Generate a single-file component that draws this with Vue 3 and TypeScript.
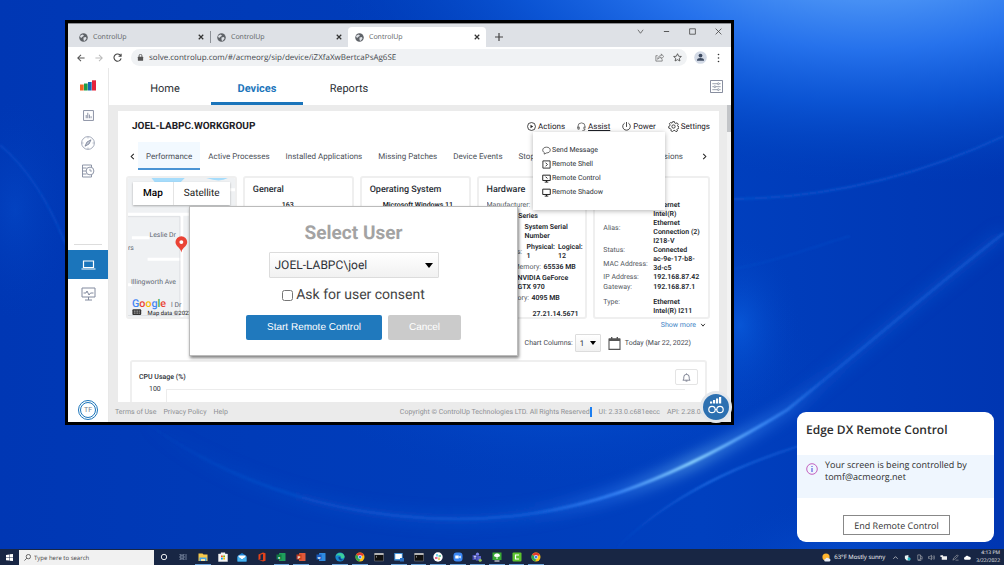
<script setup lang="ts">
import { ref } from 'vue'

interface Row {
  label: string
  lines: string[]
}

const browserTabs = [
  { title: 'ControlUp', active: false },
  { title: 'ControlUp', active: false },
  { title: 'ControlUp', active: true },
]
const navItems = ['Home', 'Devices', 'Reports']
const deviceTabs = [
  'Performance',
  'Active Processes',
  'Installed Applications',
  'Missing Patches',
  'Device Events',
  'Stop Errors',
]
const hardware: (Row & { size: string })[] = [
  { label: 'Manufacturer:', lines: [''], size: 'wide' },
  { label: '', lines: ['Dell Series'], size: 'narrow' },
  { label: 'BIOS:', lines: ['System Serial', 'Number'], size: 'mid' },
]
const network: (Row & { kind: string })[] = [
  { label: '', lines: ['Ethernet'], kind: 'first' },
  { label: 'Alias:', lines: ['Intel(R)', 'Ethernet', 'Connection (2)', 'I218-V'], kind: '' },
  { label: 'Status:', lines: ['Connected'], kind: '' },
  { label: 'MAC Address:', lines: ['ac-9e-17-b8-', '3d-c5'], kind: '' },
  { label: 'IP Address:', lines: ['192.168.87.42'], kind: 'line' },
  { label: 'Gateway:', lines: ['192.168.87.1'], kind: '' },
  { label: 'Type:', lines: ['Ethernet'], kind: 'spaced' },
  { label: '', lines: ['Intel(R) I211'], kind: '' },
]
const apps: { name: string; open: boolean }[] = [
  { name: 'explorer', open: true },
  { name: 'store', open: false },
  { name: 'mail', open: false },
  { name: 'office', open: false },
  { name: 'excel', open: true },
  { name: 'powerpoint', open: true },
  { name: 'word', open: false },
  { name: 'edge', open: true },
  { name: 'chrome', open: true },
  { name: 'terminal', open: false },
  { name: 'desktop', open: true },
  { name: 'terminal', open: true },
  { name: 'slack', open: true },
  { name: 'zoom', open: true },
  { name: 'teams', open: true },
  { name: 'tree', open: true },
  { name: 'camtasia', open: true },
  { name: 'chrome', open: true },
]
const letters: Record<string, { fill: string; side: string; text: string }> = {
  excel: { fill: '#1f9e5c', side: '#107c41', text: 'x' },
  powerpoint: { fill: '#e0593a', side: '#c43e1c', text: 'P' },
  word: { fill: '#2f8be0', side: '#185abd', text: 'w' },
}
const user = ref('JOEL-LABPC\\joel')
const consent = ref(false)
const columns = ref('1')
</script>

<template>
  <div class="desktop">
    <svg class="wallpaper" viewBox="0 0 1004 565" preserveAspectRatio="none" aria-hidden="true">
      <defs>
        <linearGradient id="base" x1="0" y1="0" x2="1" y2="0">
          <stop offset="0" stop-color="#0037b4" />
          <stop offset=".25" stop-color="#003bb8" />
          <stop offset=".7" stop-color="#0040bf" />
          <stop offset="1" stop-color="#0036b2" />
        </linearGradient>
        <radialGradient id="sky" cx="0" cy="0" r="1" gradientUnits="userSpaceOnUse" gradientTransform="translate(870 -50) scale(560 235)">
          <stop offset="0" stop-color="#4f9bf6" />
          <stop offset=".22" stop-color="#468ff4" />
          <stop offset=".42" stop-color="#2672ec" />
          <stop offset=".65" stop-color="#0d58d8" stop-opacity=".85" />
          <stop offset=".85" stop-color="#0347c4" stop-opacity=".5" />
          <stop offset="1" stop-color="#003cba" stop-opacity="0" />
        </radialGradient>
        <radialGradient id="glow">
          <stop offset="0" stop-color="#0b62e4" />
          <stop offset="1" stop-color="#0040c0" stop-opacity="0" />
        </radialGradient>
        <linearGradient id="arc" x1="140" y1="0" x2="1004" y2="0" gradientUnits="userSpaceOnUse">
          <stop offset="0" stop-color="#0a50cb" stop-opacity="0" />
          <stop offset=".15" stop-color="#0a50cb" stop-opacity=".6" />
          <stop offset=".45" stop-color="#0f5ad6" />
          <stop offset=".55" stop-color="#3480f4" />
          <stop offset=".64" stop-color="#8ad2ff" />
          <stop offset=".72" stop-color="#3b88f4" />
          <stop offset=".79" stop-color="#1257d2" />
          <stop offset="1" stop-color="#0850ca" />
        </linearGradient>
        <linearGradient id="line" x1="610" y1="0" x2="900" y2="0" gradientUnits="userSpaceOnUse">
          <stop offset="0" stop-color="#0b50cc" stop-opacity="0" />
          <stop offset=".35" stop-color="#2370e8" />
          <stop offset="1" stop-color="#0b50cc" stop-opacity="0" />
        </linearGradient>
        <filter id="soft" x="-20%" y="-20%" width="140%" height="140%"><feGaussianBlur stdDeviation="7" /></filter>
        <filter id="fine"><feGaussianBlur stdDeviation="1" /></filter>
      </defs>
      <rect width="1004" height="565" fill="url(#base)" />
      <ellipse cx="560" cy="360" rx="260" ry="125" fill="url(#glow)" opacity=".8" />
      <ellipse cx="740" cy="325" rx="60" ry="90" fill="url(#glow)" opacity=".6" />
      <ellipse cx="850" cy="565" rx="150" ry="70" fill="url(#glow)" opacity=".5" />
      <ellipse cx="15" cy="210" rx="60" ry="110" fill="url(#glow)" opacity=".25" />
      <rect width="1004" height="230" fill="url(#sky)" />
      <g fill="none">
        <path d="M734 199 C820 198 910 180 1004 136" stroke="#0a50cb" stroke-width="2" filter="url(#fine)" />
        <path d="M734 269 C780 260 810 248 850 236" stroke="#0a4cc8" stroke-width="1" filter="url(#fine)" />
        <path d="M0 145 C30 170 50 205 66 245" stroke="#0a4fca" stroke-width="2" opacity=".7" filter="url(#fine)" />
        <path d="M145 422 C240 490 350 519 459 519 C570 519 665 485 787 410 C860 352 930 290 1004 233" stroke="url(#arc)" stroke-width="12" opacity=".5" filter="url(#soft)" />
        <path d="M145 422 C240 490 350 519 459 519 C570 519 665 485 787 410 C860 352 930 290 1004 233" stroke="url(#arc)" stroke-width="3" filter="url(#fine)" />
        <path d="M617 548 Q680 484 796 447 T1004 400" stroke="url(#line)" stroke-width="2" filter="url(#fine)" />
      </g>
    </svg>

    <section class="window" aria-label="ControlUp browser window">
      <div class="tabstrip">
        <div v-for="(t, i) in browserTabs" :key="i" class="btab" :class="{ active: t.active }">
          <svg class="i9" viewBox="0 0 18 18"><circle cx="9" cy="9" r="8.5" fill="#5f6368" /><path d="M3 5l4-2 3 2-2 2-2 1-1 2-3-2zM9 9l5-1 1 3-3 4-2 1-1-3z" fill="#dee1e6" /></svg>
          <span>{{ t.title }}</span>
          <button class="plain" aria-label="Close tab"><svg class="i6" viewBox="0 0 8 8"><path d="M1 1l6 6M7 1L1 7" stroke="#333" stroke-width="1.6" /></svg></button>
        </div>
        <button class="plain plus" aria-label="New tab"><svg class="i8" viewBox="0 0 8 8"><path d="M4 0v8M0 4h8" stroke="#444" stroke-width="1.2" /></svg></button>
        <div class="winctl">
          <button class="plain" aria-label="Search tabs"><svg class="i7" viewBox="0 0 8 8"><path d="M1 2l3 4 3-4" stroke="#555" fill="none" stroke-width=".9" /></svg></button>
          <button class="plain" aria-label="Minimize"><svg class="i7" viewBox="0 0 8 8"><path d="M1 4h6" stroke="#444" /></svg></button>
          <button class="plain" aria-label="Maximize"><svg class="i7" viewBox="0 0 8 8"><path d="M.7.9h6.6v6.2H.7z" stroke="#444" fill="none" stroke-width=".9" /></svg></button>
          <button class="plain" aria-label="Close"><svg class="i7" viewBox="0 0 8 8"><path d="M.7.7l6.6 6.6M7.3.7L.7 7.3" stroke="#444" stroke-width=".9" /></svg></button>
        </div>
      </div>
      <div class="toolbar">
        <button class="plain" aria-label="Back"><svg class="i8" viewBox="0 0 10 10"><path d="M9.500 5H1M5 1L1 5l4 4" stroke="#555" fill="none" stroke-width="1.3" /></svg></button>
        <button class="plain" aria-label="Forward"><svg class="i8" viewBox="0 0 10 10"><path d="M.5 5H9M5 1l4 4-4 4" stroke="#bbb" fill="none" stroke-width="1.3" /></svg></button>
        <button class="plain" aria-label="Reload"><svg class="i9" viewBox="0 0 10 10"><path d="M8.500 3A4 4 0 1 0 9 6M9 .8v2.800H6.200" stroke="#444" fill="none" stroke-width="1.2" /></svg></button>
        <div class="omni">
          <svg class="i7" viewBox="0 0 8 8"><rect x="1" y="3.200" width="6" height="4.600" rx=".6" fill="#555" /><path d="M2.400 3.500V2a1.600 1.600 0 0 1 3.200 0v1.500" fill="none" stroke="#555" /></svg>
          <input class="url" aria-label="Address" value="solve.controlup.com/#/acmeorg/sip/device/iZXfaXwBertcaPsAg6SE" />
          <svg class="i9" viewBox="0 0 10 10"><path d="M3 3H1v6h7V7M3 7c0-3 2-4 4-4V1l2.700 3L7 6.500V5C5 5 4 5.500 3 7z" fill="none" stroke="#666" stroke-width=".8" /></svg>
          <svg class="i9" viewBox="0 0 10 10"><path d="M5 .8l1.300 2.800 3 .3-2.300 2 .7 3L5 7.400 2.300 8.900l.7-3-2.300-2 3-.3z" fill="none" stroke="#444" stroke-width=".9" /></svg>
        </div>
        <svg class="i13" viewBox="0 0 13 13"><circle cx="6.500" cy="6.500" r="6.300" fill="#d3dae6" /><circle cx="6.500" cy="4.600" r="1.900" fill="#3d4a60" /><path d="M3 9.800V9c0-1.300 1.500-2 3.500-2s3.500.7 3.500 2v.8z" fill="#3d4a60" /></svg>
        <svg class="dots" viewBox="0 0 3 10"><circle cx="1.500" cy="1.500" r=".8" fill="#333" /><circle cx="1.500" cy="5" r=".8" fill="#333" /><circle cx="1.500" cy="8.500" r=".8" fill="#333" /></svg>
      </div>

      <div class="app">
        <aside class="side">
          <svg class="logo" viewBox="0 0 16 11"><path d="M0 4.500h3.700v6H0z" fill="#f26722" /><path d="M4 3.500h3.700v7H4z" fill="#1d9e49" /><path d="M8 2h3.700v8.500H8z" fill="#1668b3" /><path d="M12 .3h4v10.200h-4z" fill="#e5223b" /></svg>
          <button class="plain" aria-label="Dashboards"><svg class="i11" viewBox="0 0 12 12"><path d="M.6.6h10.800v10.800H.6zM3.500 9V5.500M5.200 9V3M7 9V5M8.800 9V6.800" fill="none" stroke="#828a9e" stroke-width="1" /></svg></button>
          <button class="plain" aria-label="Discover"><svg class="i14" viewBox="0 0 14 14"><circle cx="7" cy="7" r="6.400" fill="none" stroke="#8c94a8" stroke-width=".8" /><path d="M10 3.800L8 8l-4 2.200L6 6z" fill="#c5cad6" stroke="#737c92" stroke-width=".8" /><path d="M7 1v1.500M7 11.500V13M1 7h1.500M11.500 7H13" stroke="#8c94a8" stroke-width=".6" /></svg></button>
          <button class="plain" aria-label="History"><svg class="i14" viewBox="0 0 14 14"><path d="M10.500 3V1H1.500v12h9v-2M1.500 4h4M1.500 7H5M1.500 10h4" fill="none" stroke="#828a9e" stroke-width=".9" /><circle cx="9" cy="7" r="3.900" fill="#fff" stroke="#828a9e" stroke-width=".9" /><path d="M9 4.800V7h2" fill="none" stroke="#828a9e" stroke-width=".8" /></svg></button>
          <hr />
          <button class="plain devices" aria-label="Devices"><svg class="i15" viewBox="0 0 15 10"><path d="M2.500 1h10v6.500h-10zM.5 9h14" fill="none" stroke="#fff" stroke-width="1.200" /></svg></button>
          <button class="plain mon" aria-label="Monitor"><svg class="i15" viewBox="0 0 15 14"><path d="M1 1h13v9H1zM4 13h7M7.500 10v3M2.500 6H5l1-2 2 4 1.500-2h3" fill="none" stroke="#828a9e" stroke-width="1" /></svg></button>
          <span class="avatar"><span>TF</span></span>
        </aside>

        <div class="main">
          <nav class="nav">
            <a v-for="n in navItems" :key="n" href="#" :class="{ on: n === 'Devices' }">{{ n }}</a>
            <button class="plain filter" aria-label="Preferences"><svg class="i13" viewBox="0 0 14 14"><path d="M.5.5h13v13H.5z" fill="none" stroke="#7a8194" /><path d="M2.500 4H8M10 4h1.500M2.500 7.200H4M6.500 7.200h5M2.500 10.400H8M10.500 10.400h1" stroke="#7a8194" stroke-width=".8" /><g fill="#fff" stroke="#7a8194" stroke-width=".8"><circle cx="9" cy="4" r="1" /><circle cx="5.200" cy="7.200" r="1" /><circle cx="9" cy="10.400" r="1" /></g></svg></button>
          </nav>

          <div class="body">
            <div class="panel">
              <header class="phead">
                <h1>JOEL-LABPC.WORKGROUP</h1>
                <button class="plain act"><svg class="i9" viewBox="0 0 10 10"><circle cx="5" cy="5" r="4.400" fill="none" stroke="#222" stroke-width=".9" /><path d="M3.900 3l3 2-3 2z" fill="#222" /></svg>Actions</button>
                <button class="plain act"><svg class="i9" viewBox="0 0 10 10"><path d="M1 7V5a4 4 0 0 1 8 0v2M1 5.500h1.500V8H1zM9 5.500H7.700V8H9M9 8c0 1-1 1.500-3 1.500" fill="none" stroke="#444" stroke-width=".8" /></svg><u>Assist</u></button>
                <button class="plain act"><svg class="i9" viewBox="0 0 10 10"><path d="M3 1.200a4.200 4.200 0 1 0 4 0M5 0v5.500" fill="none" stroke="#222" stroke-width=".9" /></svg>Power</button>
                <button class="plain act"><svg class="i11" viewBox="0 0 12 12"><circle cx="6" cy="6" r="1.800" fill="none" stroke="#222" stroke-width=".9" /><path d="M5 .7h2l.4 1.500 1 .5 1.500-.7 1.300 1.500-.8 1.300.3 1 1.300.5-.2 1.700-1.500.5-.5.8.5 1.500-1.500 1L7.600 10.300H6.400L5 11.400l-1.800-.7.100-1.600-.7-.8L.9 7.800.7 6l1.400-.8.200-1-.8-1.400L2.900 1.700l1.400.6z" fill="none" stroke="#222" stroke-width=".9" /></svg>Settings</button>
              </header>

              <div class="dtabs">
                <button class="plain arrow" aria-label="Previous tabs"><svg class="i7" viewBox="0 0 8 8"><path d="M5.500 1l-3 3 3 3" fill="none" stroke="#222" stroke-width="1.200" /></svg></button>
                <div class="dlist">
                  <button v-for="d in deviceTabs" :key="d" class="plain dtab" :class="{ on: d === 'Performance' }">{{ d }}</button>
                  <button class="plain dtab last">Sessions</button>
                </div>
                <button class="plain arrow" aria-label="Next tabs"><svg class="i7" viewBox="0 0 8 8"><path d="M2.500 1l3 3-3 3" fill="none" stroke="#222" stroke-width="1.200" /></svg></button>
              </div>

              <div class="cards">
                <div class="card map">
                  <svg viewBox="0 0 110 142" preserveAspectRatio="xMinYMin slice">
                    <rect width="110" height="142" fill="#eff1f3" />
                    <path d="M24 0h34l-5 5H28zM80 0h22q-8 5-22 0z" fill="#a6dcfb" />
                    <path d="M0 37h110M55 36v106M4 61h18M20 83h36M0 109h4M62 116h40M104 12h6" stroke="#fff" stroke-width="3" />
                    <path d="M-1 39.500h54v101H-1z" fill="none" stroke="#d9dbdf" stroke-width=".8" />
                    <g font-family="Roboto, sans-serif" font-size="7" fill="#5d6670">
                      <text x="22" y="60">Leslie Dr</text>
                      <text x="0" y="74">rs</text>
                      <text x="3" y="108">Illingworth Ave</text>
                      <text x="44" y="132">l Dr</text>
                    </g>
                    <text x="4" y="132" font-family="Roboto, sans-serif" font-size="11" font-weight="500"><tspan fill="#4285f4">G</tspan><tspan fill="#ea4335">o</tspan><tspan fill="#fbbc05">o</tspan><tspan fill="#4285f4">g</tspan><tspan fill="#34a853">l</tspan><tspan fill="#ea4335">e</tspan></text>
                    <rect x="4.500" y="134" width="9" height="6" rx="1" fill="#333" />
                    <path d="M6 136h6M6 138h6" stroke="#fff" stroke-width=".8" stroke-dasharray="1 .7" />
                    <text x="20" y="140" font-family="Roboto, sans-serif" font-size="6" fill="#111">Map data ©2022</text>
                    <path d="M54.500 76c-1-5-6-6-6-10.500a6 6 0 0 1 12 0c0 4.500-5 5.500-6 10.500z" fill="#ea4335" /><circle cx="54.500" cy="65.500" r="2" fill="#fff" />
                  </svg>
                  <div class="maptype"><button class="plain strong">Map</button><button class="plain">Satellite</button></div>
                </div>
                <div class="card">
                  <h2>General</h2>
                  <div class="row"><b class="num">163</b></div>
                </div>
                <div class="card">
                  <h2>Operating System</h2>
                  <div class="row"><b class="os">Microsoft Windows 11</b></div>
                </div>
                <div class="card">
                  <h2>Hardware</h2>
                  <div v-for="h in hardware" :key="h.label" class="row">
                    <span :class="h.size">{{ h.label }}</span>
                    <b><template v-for="l in h.lines" :key="l">{{ l }}<br /></template></b>
                  </div>
                  <div class="row"><span class="short">CPUs:</span><b class="phys">Physical:<br />1</b><b>Logical:<br />12</b></div>
                  <div class="row"><span class="long">Memory:</span><b>65536 MB</b></div>
                  <div class="row"><span class="gpu">GPU:</span><b>NVIDIA GeForce<br />GTX 970</b></div>
                  <div class="row"><span class="mem">Memory:</span><b>4095 MB</b></div>
                  <div class="row"><span class="drv">Driver</span><b class="ver">27.21.14.5671</b></div>
                </div>
                <div class="card net">
                  <h2>Network</h2>
                  <div v-for="(n, i) in network" :key="i" class="row tight" :class="n.kind">
                    <span>{{ n.label }}</span>
                    <b><template v-for="l in n.lines" :key="l">{{ l }}<br /></template></b>
                  </div>
                </div>
              </div>

              <a class="more" href="#">Show more <svg class="i6" viewBox="0 0 8 8"><path d="M1.500 2.500L4 5.500l2.500-3" fill="none" stroke="#333" stroke-width="1.300" /></svg></a>

              <div class="opts">
                <label for="cols">Chart Columns:</label>
                <div class="pick small"><select id="cols" v-model="columns"><option>1</option><option>2</option></select></div>
                <svg class="i13" viewBox="0 0 13 13"><path d="M1 2h11v10.400H1z" fill="none" stroke="#555" stroke-width="1.100" /><path d="M1 1.500h11V4H1zM3 0h1.400v2H3zM8.600 0H10v2H8.600z" fill="#555" /></svg>
                <span>Today (Mar 22, 2022)</span>
              </div>

              <div class="chart">
                <div class="chead">
                  <h3>CPU Usage (%)</h3>
                  <button class="plain bell" aria-label="Alerts"><svg class="i9" viewBox="0 0 10 10"><path d="M1 8h8C8 7 8 6 8 4.500a3 3 0 0 0-6 0C2 6 2 7 1 8zM4 9h2M5 .5v1" fill="none" stroke="#555b70" stroke-width=".8" /></svg></button>
                </div>
                <div class="plot"><span>100</span><i></i></div>
              </div>

              <div class="menu">
                <button class="plain"><svg class="i9" viewBox="0 0 10 10"><path d="M5 1.300c2.500 0 4.200 1.300 4.200 3.200S7.500 7.700 5 7.700L2.500 9V7.200C1.300 6.600.8 5.600.8 4.500.8 2.600 2.500 1.300 5 1.300z" fill="none" stroke="#333" stroke-width=".8" /></svg>Send Message</button>
                <button class="plain"><svg class="i9" viewBox="0 0 10 10"><path d="M1 1h8v8H1zM4 3l2 2-2 2" fill="none" stroke="#222" stroke-width="1" /></svg>Remote Shell</button>
                <button class="plain"><svg class="i9" viewBox="0 0 10 10"><path d="M.8 1.300h8.400v5.900H.8zM3 9h4M5 7v2M4 3l2 2" fill="none" stroke="#222" stroke-width="1.100" /></svg>Remote Control</button>
                <button class="plain"><svg class="i9" viewBox="0 0 10 10"><path d="M.8 1.300h8.400v5.900H.8zM3 9h4M5 7v2" fill="none" stroke="#222" stroke-width="1.100" /></svg>Remote Shadow</button>
              </div>

              <form class="dialog" role="dialog" aria-labelledby="dlg" @submit.prevent>
                <h2 id="dlg">Select User</h2>
                <div class="pick big"><select v-model="user" aria-label="User"><option>JOEL-LABPC\joel</option></select></div>
                <label class="consent"><input v-model="consent" type="checkbox" />Ask for user consent</label>
                <div class="btns"><button class="go">Start Remote Control</button><button type="button" class="no">Cancel</button></div>
              </form>
            </div>
            <div class="scroll"><i></i></div>
          </div>

          <footer class="foot">
            <a href="#">Terms of Use</a><a href="#">Privacy Policy</a><a href="#">Help</a>
            <span class="copy">Copyright © ControlUp Technologies LTD. All Rights Reserved<mark></mark></span>
            <span>UI: 2.33.0.c681eecc</span><span class="api">API: 2.28.0.f</span>
          </footer>
        </div>
      </div>
      <button class="plain fab" aria-label="Assistant"><svg viewBox="0 0 34 34"><circle cx="17" cy="17" r="16" fill="#e3e7ec" /><circle cx="17" cy="17" r="13" fill="#2c70b1" /><path d="M11 13.500v-2h2.200v2zM14 13.500V10h2.200v3.500zM17 13.500v-5h2.200v5zM20 13.500V7h2.200v6.500z" fill="#fff" /><circle cx="13" cy="19.500" r="3.200" fill="none" stroke="#fff" stroke-width="1.200" /><circle cx="21" cy="19.500" r="3.200" fill="none" stroke="#fff" stroke-width="1.200" /><path d="M16 19.500h2" stroke="#fff" /></svg></button>
    </section>

    <section class="toast">
      <h2>Edge DX Remote Control</h2>
      <div class="msg">
        <svg viewBox="0 0 12 12"><circle cx="6" cy="6" r="5.300" fill="none" stroke="#c050b8" stroke-width=".9" /><path d="M6 5v4M6 3v1" stroke="#4040d8" stroke-width="1" /></svg>
        <p>Your screen is being controlled by<br />tomf@acmeorg.net</p>
      </div>
      <button>End Remote Control</button>
    </section>

    <footer class="taskbar">
      <button class="plain start" aria-label="Start"><svg class="i7" viewBox="0 0 8 8"><path d="M0 1l3.700-.5v3.300H0zM4.200.4L8 0v3.800H4.200zM0 4.200h3.700v3.300L0 7zM4.200 4.200H8V8l-3.800-.4z" fill="#fff" /></svg></button>
      <label class="search"><svg class="i7" viewBox="0 0 8 8"><circle cx="5" cy="3" r="2.500" fill="none" stroke="#333" stroke-width=".8" /><path d="M3.200 4.800L.5 7.500" stroke="#333" stroke-width=".8" /></svg><input aria-label="Search" placeholder="Type here to search" /></label>
      <div class="apps">
        <button class="plain tb" aria-label="Cortana"><svg class="i10" viewBox="0 0 10 10"><circle cx="5" cy="5" r="2.700" fill="none" stroke="#fff" stroke-width=".9" /></svg></button>
        <button class="plain tb" aria-label="Task view"><svg class="i10" viewBox="0 0 10 10"><path d="M2 2v1h4V2M2 8V7h4v1M2 4h4v2H2zM8 2v6" fill="none" stroke="#94a0b8" stroke-width=".7" /></svg></button>
        <button v-for="(a, i) in apps" :key="i" class="plain tb" :class="{ open: a.open }" :aria-label="a.name">
          <svg class="i10" viewBox="0 0 10 10">
            <template v-if="a.name === 'explorer'"><path d="M.5 1.500h4l1 1h4v6.500h-9z" fill="#f8c94a" /><path d="M1.500 5.500h7V9h-7z" fill="#4aa8e8" /><path d="M3 7h4v2H3z" fill="#f5e3a0" /></template>
            <template v-else-if="a.name === 'store'"><path d="M.5 2h9v7.500h-9zM3 2V.7h4V2" fill="#f4f4f4" stroke="#f4f4f4" stroke-width=".4" /><path d="M3 3.500h1.800v1.800H3z" fill="#f25022" /><path d="M5.200 3.500H7v1.800H5.200z" fill="#7fba00" /><path d="M3 5.700h1.800v1.800H3z" fill="#00a4ef" /><path d="M5.200 5.700H7v1.800H5.200z" fill="#ffb900" /></template>
            <template v-else-if="a.name === 'mail'"><path d="M.5 4L5 1l4.500 3v5.500h-9z" fill="#1b84d8" /><path d="M1.500 3.500h7V5L5 7.500 1.500 5z" fill="#fff" /><path d="M.5 4.500L5 7.500l4.500-3v5h-9z" fill="#48b4f0" /></template>
            <template v-else-if="a.name === 'office'"><path d="M1.500 2.500L6 .5l2.500.8v7.400L6 9.500l-4-1.500 4 .3V2l-2.500.7v4.500l-2 .8z" fill="#e4431b" /></template>
            <template v-else-if="letters[a.name]"><rect x="3" y="1" width="6.500" height="8" rx=".6" :fill="letters[a.name].fill" /><rect x=".5" y="2.500" width="5" height="5" :fill="letters[a.name].side" /><text x="3" y="6.600" font-size="4" font-family="Roboto, sans-serif" font-weight="700" text-anchor="middle" fill="#fff">{{ letters[a.name].text }}</text></template>
            <template v-else-if="a.name === 'edge'"><circle cx="5" cy="5" r="4.600" fill="#1687d0" /><path d="M.6 4.500C1.500 0 8.500-.5 9.600 4.500 9.500 7 6 7 6 5.500 6 3 2 2.500.6 4.500z" fill="#3ccf9a" /><path d="M3.500 5C3 8 6 9 8.500 8 6 7.500 5 6.500 5.300 4.800z" fill="#0d3f86" /></template>
            <template v-else-if="a.name === 'chrome'"><circle cx="5" cy="5" r="4.500" fill="#fbc116" /><path d="M5 5L1.100 2.700A4.500 4.500 0 0 1 9 3z" fill="#e33b2e" /><path d="M5 5L1.100 2.700A4.500 4.500 0 0 0 4.500 9.500z" fill="#2da94f" /><circle cx="5" cy="5" r="2" fill="#fff" /><circle cx="5" cy="5" r="1.500" fill="#3f7de8" /></template>
            <template v-else-if="a.name === 'terminal'"><path d="M.5 1.500h9v7.500h-9z" fill="#111" stroke="#777" stroke-width=".6" /><path d="M.5 1.300h9v1.500h-9z" fill="#ddd" /><path d="M2 4l1 .8L2 5.600" stroke="#ddd" stroke-width=".5" fill="none" /></template>
            <template v-else-if="a.name === 'desktop'"><path d="M.3 1h8.400v7.500H.3z" fill="#4698e0" /><path d="M1.300 2h6.500v5H1.300z" fill="#fff" /><path d="M6 6h4v3.500H6z" fill="#2a6ec0" /></template>
            <template v-else-if="a.name === 'slack'"><circle cx="5" cy="5" r="4.700" fill="#fff" /><path d="M4 2v2.500" stroke="#36c5f0" stroke-width="1.300" /><path d="M5.500 4H8" stroke="#2eb67d" stroke-width="1.300" /><path d="M6 5.500V8" stroke="#ecb22e" stroke-width="1.300" /><path d="M2 6h2.500" stroke="#e01e5a" stroke-width="1.300" /></template>
            <template v-else-if="a.name === 'zoom'"><rect x=".5" y=".5" width="9" height="9" rx="3" fill="#3b87f5" /><path d="M2.300 3.500h3.400v3H2.300zM6 4.700l1.700-1.200v3L6 5.300z" fill="#fff" /></template>
            <template v-else-if="a.name === 'teams'"><circle cx="5.500" cy="2.200" r="1.600" fill="#7b83eb" /><path d="M3 4h6v4.500H4z" fill="#5b62c8" /><path d="M.5 3h5v5h-5z" fill="#4048b0" /><path d="M1.700 4.300h2.600M3 4.300V7" stroke="#fff" stroke-width=".7" /><circle cx="8.200" cy="8.200" r="1.500" fill="#92c353" /></template>
            <template v-else-if="a.name === 'tree'"><rect x=".5" y=".5" width="9" height="7.500" fill="#39a935" /><path d="M2 4c0-2 2-2.500 3-2.500S8 2 8 4c-1 1.500-5 1.500-6 0zM4.500 5h1v2h-1zM2.500 8.500h5v1h-5z" fill="#fff" /></template>
            <template v-else><rect x=".5" y=".5" width="9" height="9" rx="1" fill="#5cc22d" /><path d="M7 3H3.500v4H7" fill="none" stroke="#fff" stroke-width="1.200" /></template>
          </svg>
        </button>
      </div>
      <div class="tray">
        <svg class="i9" viewBox="0 0 9 9"><circle cx="4" cy="4" r="3.600" fill="#ffb52e" /><path d="M3.500 8.500a1.300 1.300 0 0 1 0-2.600 1.800 1.800 0 0 1 3.300-.3A1.500 1.500 0 0 1 7.500 8.500z" fill="#e6ecf5" /></svg>
        <span>63°F Mostly sunny</span>
        <svg class="i7 t1" viewBox="0 0 8 8"><path d="M1.500 5.500L4 3l2.500 2.500" fill="none" stroke="#ddd" stroke-width=".8" /></svg>
        <svg class="i7" viewBox="0 0 8 8"><path d="M1 2l4-1v3l2 .5V7L3 7.500 1 5z" fill="#e8f4f4" /><circle cx="5.800" cy="5.700" r="1.700" fill="#22b8c8" /></svg>
        <svg class="i7" viewBox="0 0 8 8"><path d="M2 1h3v5.500H2zM5 2l2 1v3L5 5M2 7.500h4" fill="none" stroke="#ccc" stroke-width=".6" /></svg>
        <svg class="i7" viewBox="0 0 8 8"><path d="M.5 3h1.500l2-1.500v5L2 5H.5zM5.500 2.500q1 1.500 0 3M6.700 1.500q1.700 2.500 0 5" fill="none" stroke="#ccc" stroke-width=".6" /></svg>
        <svg class="i7" viewBox="0 0 8 8"><path d="M2 2.500h6v4H2zM.5 1.500h3v2h-3z" fill="#f0f0f0" /></svg>
        <svg class="i7" viewBox="0 0 8 8"><path d="M1 7l1-2.500L6 1l1.200 1.300L3 6zM4 7h3.500" fill="none" stroke="#bbb" stroke-width=".6" /></svg>
        <svg class="i7" viewBox="0 0 8 8"><path d="M1.500 6.500a1.500 1.500 0 0 1 0-3 2.200 2.200 0 0 1 4-.3 1.700 1.700 0 0 1 1 3.300z" fill="#fff" /></svg>
        <span class="clock">4:13 PM<br />3/22/2022</span>
      </div>
    </footer>
  </div>
</template>

<style>
html,
body {
  overflow: hidden;
}
</style>

<style scoped>
* {
  box-sizing: border-box;
}
.desktop {
  position: relative;
  height: 100vh;
  overflow: hidden;
  background: #003ab8;
  font-family: Roboto, 'Liberation Sans', sans-serif;
  font-size: 8px;
  text-rendering: geometricPrecision;
  color: #2b2f36;
}
button, input, select { text-rendering: inherit; }
h1, h2, h3, p { margin: 0; }
a { color: inherit; text-decoration: none; }
svg { display: block; flex: none; }
.wallpaper { position: absolute; inset: 0; width: 100%; height: 100%; }
.plain {
  display: flex;
  align-items: center;
  justify-content: center;
  flex: none;
  padding: 0;
  border: 0;
  background: none;
  font: inherit;
  color: inherit;
}
.i6 { width: 6px; height: 6px; }
.i7 { width: 7px; height: 7px; }
.i8 { width: 8px; height: 8px; }
.i9 { width: 9px; height: 9px; }
.i10 { width: 10px; height: 10px; }
.i11 { width: 11px; height: 11px; }
.i13 { width: 13px; height: 13px; }
.i14 { width: 14px; height: 14px; }
.i15 { width: 15px; height: 14px; }

.window {
  position: absolute;
  top: 20px;
  left: 65px;
  right: 270px;
  bottom: 140px;
  display: flex;
  flex-direction: column;
  border: 3px solid #000;
  background: #fff;
}
.tabstrip {
  display: flex;
  height: 24px;
  flex: none;
  align-items: flex-end;
  padding-left: 4px;
  border-top: 1px solid #8b8d91;
  background: #dee1e6;
  font-family: 'Open Sans', 'Noto Sans', sans-serif;
  font-size: 7px;
  color: #5a5e64;
}
.btab {
  display: flex;
  align-items: center;
  width: 138px;
  height: 20px;
  padding: 0 6px 0 7px;
  gap: 5px;
}
.btab span { flex: 1; }
.btab:first-child .plain { position: relative; }
.btab:first-child .plain::after {
  content: '';
  position: absolute;
  left: 12px;
  width: 1px;
  height: 12px;
  background: #8d9197;
}
.btab.active { border-radius: 4px 4px 0 0; background: #fff; }
.plus { width: 25px; height: 20px; }
.winctl { display: flex; margin-left: auto; align-self: flex-start; }
.winctl .plain { width: 26px; height: 14px; }
.toolbar { display: flex; height: 21px; flex: none; align-items: center; padding: 0 11px 0 9px; gap: 10px; }
.omni {
  display: flex;
  flex: 1;
  align-items: center;
  height: 17px;
  margin: 0 -3px 0 -1px;
  padding: 0 5px 0 6px;
  gap: 9px;
  border-radius: 9px;
  background: #f0f2f4;
}
.url {
  flex: 1;
  min-width: 0;
  margin-left: -4px;
  padding: 0;
  border: 0;
  background: none;
  font: 8px 'Open Sans', 'Noto Sans', sans-serif;
  color: #44484d;
}
.dots { width: 3px; height: 10px; }

.app { display: flex; flex: 1; min-height: 0; }
.side {
  display: flex;
  flex-direction: column;
  align-items: center;
  width: 41px;
  flex: none;
  padding-top: 12px;
  border-right: 1px solid #e8e8e8;
}
.logo { width: 16px; height: 11px; margin-bottom: 17px; }
.side .plain { height: 14px; margin-bottom: 14px; }
.side hr { width: 28px; margin: 52px 0 5px; border: 0; border-top: 1px solid #ddd; }
.side .devices { width: 100%; height: 29px; margin-bottom: 8px; background: #1b75bb; }
.side .devices svg { height: 10px; }
.avatar {
  display: flex;
  width: 20px;
  height: 20px;
  margin: auto 0 2px;
  padding: 1px;
  border: 1px solid #1b75bb;
  border-radius: 50%;
}
.avatar span {
  flex: 1;
  border: 1px solid #1b75bb;
  border-radius: 50%;
  font-size: 7px;
  line-height: 14px;
  text-align: center;
  color: #7a8290;
}
.main { display: flex; flex: 1; flex-direction: column; min-width: 0; }
.nav { display: flex; height: 37px; flex: none; align-items: stretch; padding: 0 8px 0 10px; }
.nav a {
  width: 92px;
  padding-top: 4px;
  border-bottom: 3px solid transparent;
  font-size: 11px;
  line-height: 34px;
  text-align: center;
}
.nav a.on { border-color: #1b75bb; font-weight: 700; color: #1b75bb; }
.filter { margin-left: auto; }
.body {
  display: flex;
  flex: 1;
  min-height: 0;
  padding: 6px 0 0 9px;
  background: #ebebeb;
}
.panel {
  position: relative;
  display: flex;
  flex: 1;
  flex-direction: column;
  min-width: 0;
  margin-right: 8px;
  background: #fff;
}
.scroll { width: 4px; margin-top: -6px; background: #f3f3f3; }
.scroll i { display: block; height: 27px; background: #c3c5c8; }
.phead { display: flex; height: 31px; flex: none; align-items: center; padding: 0 9px 0 14px; gap: 12px; font-size: 8px; color: #1d2026; }
.phead h1 { flex: 1; font-size: 10px; font-weight: 700; }
.act { gap: 2px; }
.dtabs { display: flex; height: 28px; flex: none; align-items: center; padding: 0 10px 0 9px; color: #4b5058; }
.arrow { width: 10px; }
.dlist { display: flex; flex: 1; min-width: 0; height: 28px; margin-left: 1px; overflow: hidden; }
.dtab { padding: 0 8px; }
.dtab.on { padding-top: 2px; border-bottom: 2px solid #4a94d4; background: #f2f9ff; }
.dtab.last { margin-left: auto; padding-right: 16px; }
.cards {
  display: grid;
  grid-template-columns: repeat(4, minmax(0, 19fr)) minmax(0, 20fr);
  gap: 6px;
  height: 143px;
  flex: none;
  margin: 6px 9px 0 8px;
}
.card {
  position: relative;
  padding: 6px 0 0 8px;
  overflow: hidden;
  border: 2px solid #efefef;
  border-radius: 3px;
  font-size: 7px;
  line-height: 9px;
  white-space: nowrap;
}
.card h2 { margin-bottom: 4px; font-size: 9px; font-weight: 500; line-height: 12px; }
.map { padding: 0; }
.map svg { width: 100%; height: 100%; }
.maptype {
  position: absolute;
  top: 4px;
  left: 5px;
  display: flex;
  height: 23px;
  background: #fff;
  box-shadow: 0 1px 2px rgba(0, 0, 0, .3);
  font-size: 10px;
  color: #222;
}
.maptype .plain { padding: 0 10px; }
.maptype .strong { border-right: 1px solid #e4e4e4; font-weight: 500; color: #000; }
.row { display: flex; align-items: center; padding: 1px 0; color: #555a62; }
.row span { flex: none; overflow: hidden; }
.row b { font-weight: 600; color: #24272c; }
.num { padding-left: 29px; }
.os { padding-left: 13px; }
.wide { width: 50px; }
.narrow { width: 18px; }
.mid { width: 38px; }
.short { width: 40px; padding-left: 17px; }
.phys { margin-right: 3px; }
.long { width: 57px; padding-left: 27px; }
.gpu { width: 31px; }
.mem { width: 45px; padding-left: 15px; }
.drv { width: 46px; height: 18px; padding-left: 13px; }
.net span { width: 50px; }
.tight { padding: 0; }
.first { padding-top: 1px; }
.line { padding-bottom: 1px; }
.spaced { margin-top: 6px; }
.more { display: flex; height: 11px; flex: none; align-items: center; justify-content: flex-end; margin-right: 13px; gap: 4px; font-size: 7px; color: #3d83c6; }
.opts { display: flex; height: 26px; flex: none; align-items: center; justify-content: flex-end; margin-right: 28px; gap: 2px; font-size: 7px; color: #444950; }
.opts .i13 { margin: 0 2px 0 5px; }
.pick { position: relative; display: flex; }
.pick::after {
  content: '';
  position: absolute;
  top: 50%;
  right: 5px;
  margin-top: -2px;
  border: 3px solid transparent;
  border-top: 4px solid #000;
  border-bottom: 0;
  pointer-events: none;
}
.pick select {
  width: 100%;
  appearance: none;
  border: 1px solid #dcdcdc;
  border-radius: 1px;
  background: linear-gradient(#fff, #f1f1f1);
  font: inherit;
  color: #2f3238;
}
.small { width: 26px; font-size: 8px; }
.small select { height: 18px; padding: 0 4px; }
.chart {
  display: flex;
  flex: 1;
  flex-direction: column;
  min-height: 0;
  margin: 4px 12px 0;
  overflow: hidden;
  border: 2px solid #efefef;
  border-bottom: 0;
  border-radius: 3px 3px 0 0;
}
.chead { display: flex; height: 23px; flex: none; align-items: flex-end; justify-content: space-between; padding: 0 7px 0 7px; }
.chead h3 { font-size: 7px; font-weight: 500; line-height: 15px; }
.bell { width: 23px; height: 16px; border: 1px solid #e4e4e4; border-radius: 2px; }
.plot { display: flex; padding: 0 20px 0 17px; gap: 5px; font-size: 7px; line-height: 8px; }
.plot i { flex: 1; height: 20px; margin-top: 4px; border: 1px solid #ececec; border-width: 1px 0 0 1px; }
.menu {
  position: absolute;
  top: 21px;
  right: 54px;
  display: flex;
  flex-direction: column;
  align-items: flex-start;
  width: 132px;
  height: 78px;
  padding: 11px 9px;
  background: #fff;
  box-shadow: 0 1px 5px rgba(0, 0, 0, .3);
  font-size: 7px;
}
.menu .plain { height: 14px; gap: 1px; }
.dialog {
  position: absolute;
  top: 95px;
  left: 71px;
  display: flex;
  flex-direction: column;
  align-items: center;
  width: 329px;
  height: 150px;
  padding-top: 14px;
  border: 1px solid #bbb;
  background: #fff;
  box-shadow: 1px 2px 3px rgba(0, 0, 0, .5);
  font-size: 14px;
}
.dialog h2 { font-size: 19px; font-weight: 700; line-height: 24px; color: #a3a3a3; }
.big { width: 170px; margin-top: 7px; font-size: 12px; }
.big select { height: 26px; padding: 0 5px; }
.big::after { right: 6px; border-width: 5px 4px 0; }
.consent { display: flex; align-items: center; height: 20px; margin-top: 7px; gap: 3px; line-height: 18px; color: #444; }
.consent input { width: 11px; height: 11px; margin: 0; }
.btns { display: flex; margin-top: 10px; gap: 6px; }
.btns button {
  height: 25px;
  padding: 0;
  border: 0;
  border-radius: 2px;
  font: 10px 'Liberation Sans', Arial, sans-serif;
  color: #fff;
}
.btns .go { width: 136px; background: #2079bd; }
.btns .no { width: 73px; background: #cbcbcb; }
.foot {
  display: flex;
  height: 20px;
  flex: none;
  align-items: center;
  padding-left: 6px;
  gap: 7px;
  overflow: hidden;
  background: #ebebeb;
  font-size: 7px;
  white-space: nowrap;
  color: #8e9094;
}
.copy { display: flex; align-items: center; margin-left: auto; }
.foot mark { width: 2px; height: 10px; background: #1b7df0; }
.api { margin-right: 26px; }
.fab { position: absolute; right: -2px; bottom: -2px; width: 34px; height: 34px; }
.fab svg { width: 34px; height: 34px; }

.toast {
  position: absolute;
  right: 10px;
  bottom: 23px;
  display: flex;
  flex-direction: column;
  width: 197px;
  height: 130px;
  overflow: hidden;
  border-radius: 9px;
  background: #fff;
  font-family: 'Open Sans', 'Noto Sans', sans-serif;
  color: #2e2e2e;
}
.toast h2 { height: 43px; padding: 10px 9px 0; font-size: 12px; font-weight: 600; line-height: 16px; }
.msg { display: flex; height: 43px; padding: 4px 9px; gap: 7px; background: #eff6fe; }
.msg svg { width: 12px; height: 12px; margin-top: 4px; }
.msg p { font-size: 9px; line-height: 12px; white-space: nowrap; }
.toast button {
  width: 107px;
  height: 20px;
  margin: 17px 0 0 46px;
  padding: 0;
  border: 1px solid #888;
  background: #fff;
  font: 9px 'Open Sans', 'Noto Sans', sans-serif;
  color: #333;
}

.taskbar {
  position: absolute;
  left: 0;
  right: 0;
  bottom: 0;
  display: flex;
  height: 16px;
  align-items: stretch;
  background: #182644;
  font-family: 'Open Sans', 'Noto Sans', sans-serif;
  font-size: 6px;
  color: #fff;
}
.start { width: 19px; }
.search { display: flex; align-items: center; width: 135px; margin-top: 1px; padding-left: 5px; gap: 3px; background: #f1f1f1; }
.search input { flex: 1; min-width: 0; padding: 0; border: 0; background: none; font: 6px 'Open Sans', 'Noto Sans', sans-serif; }
.search input::placeholder { color: #444; opacity: 1; }
.apps { display: grid; grid-template-columns: repeat(20, 1fr); width: 392px; }
.tb { margin: 0 2px; border-bottom: 1px solid transparent; }
.tb.open { border-color: #6fa6dc; }
.tray { display: flex; align-items: center; gap: 5px; margin-left: auto; padding-right: 4px; white-space: nowrap; }
.tray > .i9 { margin-right: -2px; }
.t1 { margin-left: 2px; }
.clock { text-align: right; font-size: 5px; line-height: 8px; }
</style>
